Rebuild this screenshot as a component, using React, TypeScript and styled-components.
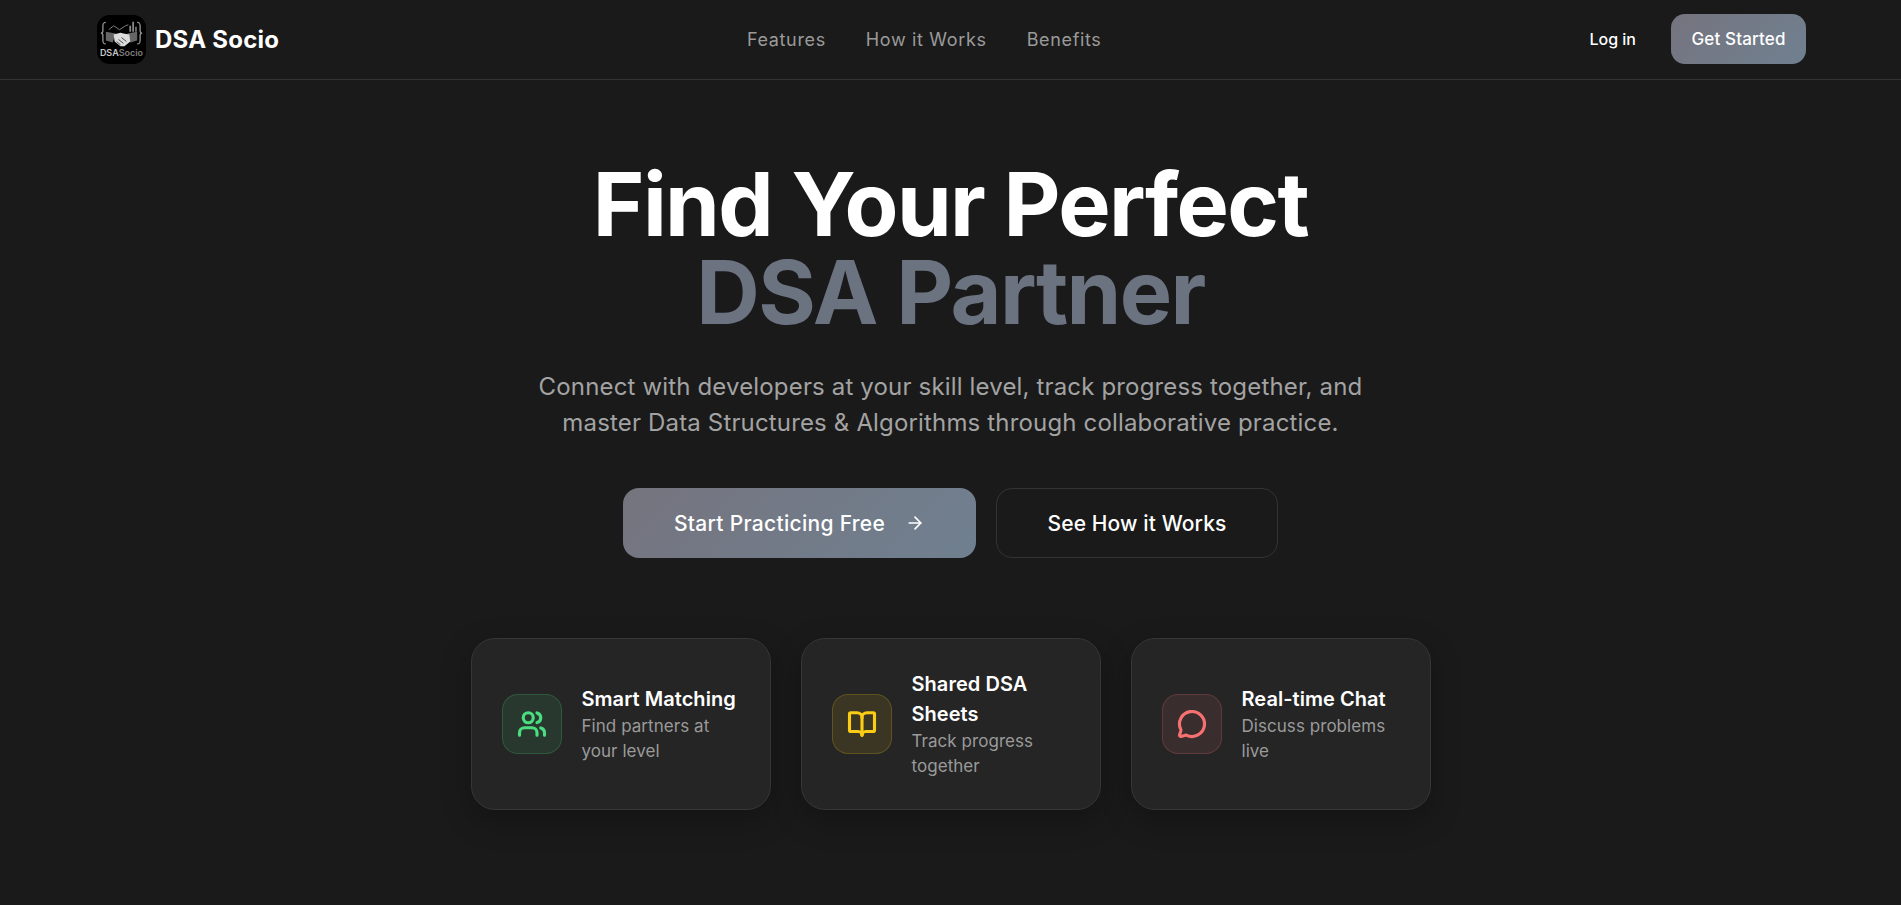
import React from 'react'
import styled, { createGlobalStyle } from 'styled-components'
import { ArrowRight, BookOpen, MessageCircle, Users } from 'lucide-react'

const GlobalStyle = createGlobalStyle`
  html, body {
    margin: 0;
    padding: 0;
    background: #1a1a1a;
  }
  * {
    box-sizing: border-box;
  }
  body {
    font-family: 'Inter', 'Noto Sans', sans-serif;
  }
`

const Page = styled.div`
  width: 100%;
  height: 905px;
  overflow: hidden;
  background: #1a1a1a;
  color: #fff;
`

const Header = styled.header`
  height: 80px;
  padding: 14px 95px 0 97px;
  border-bottom: 1px solid #333;
  display: flex;
  justify-content: space-between;
  align-items: flex-start;
`

const Brand = styled.div`
  display: flex;
  align-items: center;
  gap: 9px;
  height: 50px;
  width: 183px;
`

const BrandName = styled.span`
  font-size: 24px;
  font-weight: 700;
  letter-spacing: 0.25px;
`

const Nav = styled.nav`
  display: flex;
  gap: 40px;
  height: 50px;
  align-items: center;
  margin-left: -23px;
`

const NavLink = styled.a`
  font-size: 18px;
  letter-spacing: 0.65px;
  color: #9a9a9a;
`

const Actions = styled.div`
  display: flex;
  align-items: center;
  gap: 35px;
`

const LogIn = styled.a`
  font-size: 16px;
  font-weight: 500;
  margin-left: -2px;
  color: #fff;
`

const GradientButton = styled.a<{ $large?: boolean }>`
  display: flex;
  align-items: center;
  justify-content: center;
  gap: 20px;
  height: ${({ $large }) => ($large ? '70px' : '50px')};
  width: ${({ $large }) => ($large ? '353px' : '135px')};
  border-radius: ${({ $large }) => ($large ? '16px' : '14px')};
  font-size: ${({ $large }) => ($large ? '21px' : '17px')};
  letter-spacing: ${({ $large }) => ($large ? '0.3px' : '0.15px')};
  font-weight: 500;
  color: #fff;
  background: linear-gradient(135deg, #75747e, #708090);
`

const OutlineButton = styled.a`
  display: flex;
  align-items: center;
  justify-content: center;
  width: 282px;
  height: 70px;
  border: 1px solid #333;
  border-radius: 16px;
  font-size: 21px;
  letter-spacing: 0.12px;
  font-weight: 500;
  color: #fff;
`

const Hero = styled.main`
  display: flex;
  flex-direction: column;
  align-items: center;
  padding-top: 80px;
`

const Title = styled.h1`
  margin: 0;
  font-size: 88px;
  line-height: 88px;
  font-weight: 700;
  letter-spacing: -1.6px;
  text-align: center;
`

const Accent = styled.span`
  display: block;
  color: #6b7280;
`

const Subtitle = styled.p`
  margin: 33px 0 0;
  font-size: 24px;
  line-height: 36px;
  letter-spacing: 0.16px;
  color: #a3a3a3;
  text-align: center;
`

const ButtonRow = styled.div`
  display: flex;
  gap: 20px;
  margin-top: 47px;
`

const CardRow = styled.section`
  display: flex;
  gap: 30px;
  margin-top: 80px;
`

const Card = styled.article`
  width: 300px;
  height: 172px;
  padding: 0 30px;
  display: flex;
  align-items: center;
  gap: 20px;
  background: #252525;
  border: 1px solid #363636;
  border-radius: 24px;
  box-shadow: 0 10px 30px rgba(0, 0, 0, 0.25);
`

const IconBox = styled.div<{ $tone: string }>`
  flex: none;
  width: 60px;
  height: 60px;
  display: flex;
  align-items: center;
  justify-content: center;
  border-radius: 16px;
  color: ${({ $tone }) => $tone};
  background: ${({ $tone }) => `${$tone}1a`};
  border: 1px solid ${({ $tone }) => `${$tone}33`};
`

const CardTitle = styled.h3`
  margin: 0;
  font-size: 20px;
  line-height: 30px;
  font-weight: 600;
  letter-spacing: 0.05px;
`

const CardText = styled.p`
  margin: 0;
  font-size: 17px;
  line-height: 25px;
  letter-spacing: 0.05px;
  color: #9a9a9a;
`

const LogoMark = () => (
  <svg width="49" height="49" viewBox="0 0 50 50">
    <rect width="50" height="50" rx="13" fill="#000" />
    <g fill="none" stroke="#8f8f8f" strokeWidth="1.4">
      <path d="M9 7.5c-2.5 0-3 1-3 4v4.5c0 2-.8 2.5-2 2.5 1.2 0 2 .5 2 2.5v4.5c0 3 .5 4 3 4" />
      <path d="M41 7.5c2.5 0 3 1 3 4v4.5c0 2 .8 2.5 2 2.5-1.2 0-2 .5-2 2.5v4.5c0 3-.5 4-3 4" />
      <path d="M12 15l5-4 6 4 6-4 3-1" strokeWidth="0.9" />
    </g>
    <path d="M33 11h1.8v6H33zM36 7h1.8v10H36zM39 12h1.5v5H39z" fill="#8a8a8a" />
    <path d="M9 17l10 2-3 9-7-2zM41 17l-10 2 3 9 7-2z" fill="#666" />
    <path d="M17 20l7-2 3 1 6 1 1 7-6 5h-4l-6-5z" fill="#dcdcdc" />
    <path d="M22 25l5 4M25 23l5 4M20 27l4 3.5" stroke="#222" strokeWidth="0.8" />
    <text x="25" y="42" fontSize="9.2" fontWeight="600" textAnchor="middle" fill="#c8c8c8" fontFamily="Inter, sans-serif">
      DSA<tspan fill="#7d7d7d">Socio</tspan>
    </text>
  </svg>
)

const features = [
  { title: 'Smart Matching', text: 'Find partners at your level', tone: '#4ade80', Icon: Users },
  { title: 'Shared DSA Sheets', text: 'Track progress together', tone: '#facc15', Icon: BookOpen },
  { title: 'Real-time Chat', text: 'Discuss problems live', tone: '#f87171', Icon: MessageCircle },
]

const App: React.FC = () => (
  <Page>
    <GlobalStyle />
    <Header>
      <Brand>
        <LogoMark />
        <BrandName>DSA Socio</BrandName>
      </Brand>
      <Nav>
        <NavLink>Features</NavLink>
        <NavLink>How it Works</NavLink>
        <NavLink>Benefits</NavLink>
      </Nav>
      <Actions>
        <LogIn>Log in</LogIn>
        <GradientButton>Get Started</GradientButton>
      </Actions>
    </Header>
    <Hero>
      <Title>
        Find Your Perfect
        <Accent>DSA Partner</Accent>
      </Title>
      <Subtitle>
        Connect with developers at your skill level, track progress together, and
        <br />
        master Data Structures &amp; Algorithms through collaborative practice.
      </Subtitle>
      <ButtonRow>
        <GradientButton $large>
          Start Practicing Free
          <ArrowRight size={20} />
        </GradientButton>
        <OutlineButton>See How it Works</OutlineButton>
      </ButtonRow>
      <CardRow>
        {features.map(({ title, text, tone, Icon }) => (
          <Card key={title}>
            <IconBox $tone={tone}>
              <Icon size={30} strokeWidth={2.5} />
            </IconBox>
            <div>
              <CardTitle>{title}</CardTitle>
              <CardText>{text}</CardText>
            </div>
          </Card>
        ))}
      </CardRow>
    </Hero>
  </Page>
)

export default App
